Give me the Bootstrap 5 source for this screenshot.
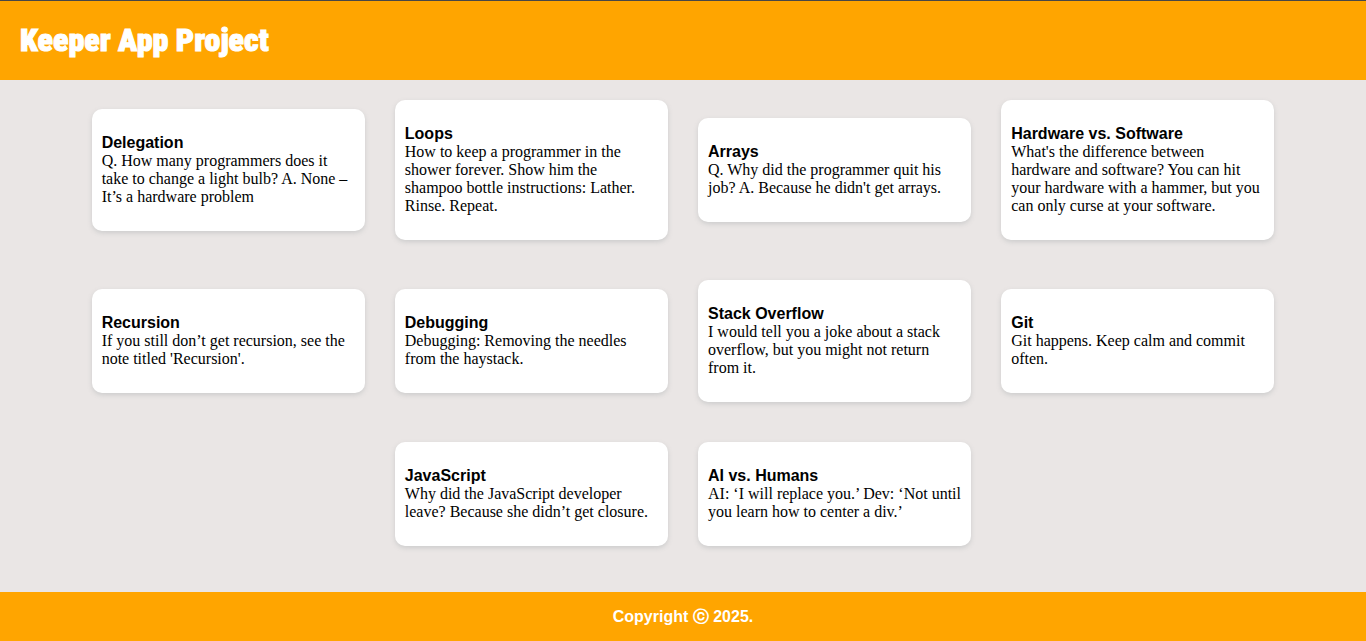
<!DOCTYPE html>
<html lang="en">
<head>
<meta charset="utf-8">
<meta name="viewport" content="width=device-width, initial-scale=1">
<title>Keeper App Project</title>
<link href="https://cdn.jsdelivr.net/npm/bootstrap@5.3.0/dist/css/bootstrap.min.css" rel="stylesheet">
<style>
  body { background: #eae6e5; color: #000; font-family: "Liberation Serif", "Times New Roman", serif; }
  .bar { background: #ffa500; color: #fff; }
  .top-bar { border-top: 1px solid #474747; padding: 20px; }
  .top-bar h1 { font: 900 32px/39px Impact, "Roboto Condensed", Roboto, sans-serif; -webkit-text-stroke: 1px #fff; }
  .notes { padding: 20px 60px 46px; row-gap: 40px; }
  .note { width: 20vw; margin: 0 15px; padding: 24px 10px 25px; border: 0; border-radius: 10px; box-shadow: 0 2px 5px #ccc; color: #000; }
  .note h2 { font: bold 16px/19px "Liberation Sans", Arial, sans-serif; }
  .note p { font-size: 16px; line-height: 18px; }
  .bottom-bar { font: bold 16px/19px "Liberation Sans", Arial, sans-serif; padding: 15px; }
</style>
</head>
<body class="d-flex flex-column min-vh-100">
<header class="bar top-bar"><h1 class="m-0">Keeper App Project</h1></header>
<main class="notes flex-grow-1 d-flex flex-wrap justify-content-center align-items-center align-content-start">
  <article class="card note"><h2 class="m-0">Delegation</h2><p class="m-0">Q. How many programmers does it take to change a light bulb? A. None – It’s a hardware problem</p></article>
  <article class="card note"><h2 class="m-0">Loops</h2><p class="m-0">How to keep a programmer in the shower forever. Show him the shampoo bottle instructions: Lather. Rinse. Repeat.</p></article>
  <article class="card note"><h2 class="m-0">Arrays</h2><p class="m-0">Q. Why did the programmer quit his job? A. Because he didn't get arrays.</p></article>
  <article class="card note"><h2 class="m-0">Hardware vs. Software</h2><p class="m-0">What's the difference between hardware and software? You can hit your hardware with a hammer, but you can only curse at your software.</p></article>
  <article class="card note"><h2 class="m-0">Recursion</h2><p class="m-0">If you still don’t get recursion, see the note titled 'Recursion'.</p></article>
  <article class="card note"><h2 class="m-0">Debugging</h2><p class="m-0">Debugging: Removing the needles from the haystack.</p></article>
  <article class="card note"><h2 class="m-0">Stack Overflow</h2><p class="m-0">I would tell you a joke about a stack overflow, but you might not return from it.</p></article>
  <article class="card note"><h2 class="m-0">Git</h2><p class="m-0">Git happens. Keep calm and commit often.</p></article>
  <article class="card note"><h2 class="m-0">JavaScript</h2><p class="m-0">Why did the JavaScript developer leave? Because she didn’t get closure.</p></article>
  <article class="card note"><h2 class="m-0">AI vs. Humans</h2><p class="m-0">AI: ‘I will replace you.’ Dev: ‘Not until you learn how to center a div.’</p></article>
</main>
<footer class="bar bottom-bar text-center">Copyright ⓒ 2025.</footer>
<script src="https://cdn.jsdelivr.net/npm/bootstrap@5.3.0/dist/js/bootstrap.bundle.min.js"></script>
</body>
</html>
